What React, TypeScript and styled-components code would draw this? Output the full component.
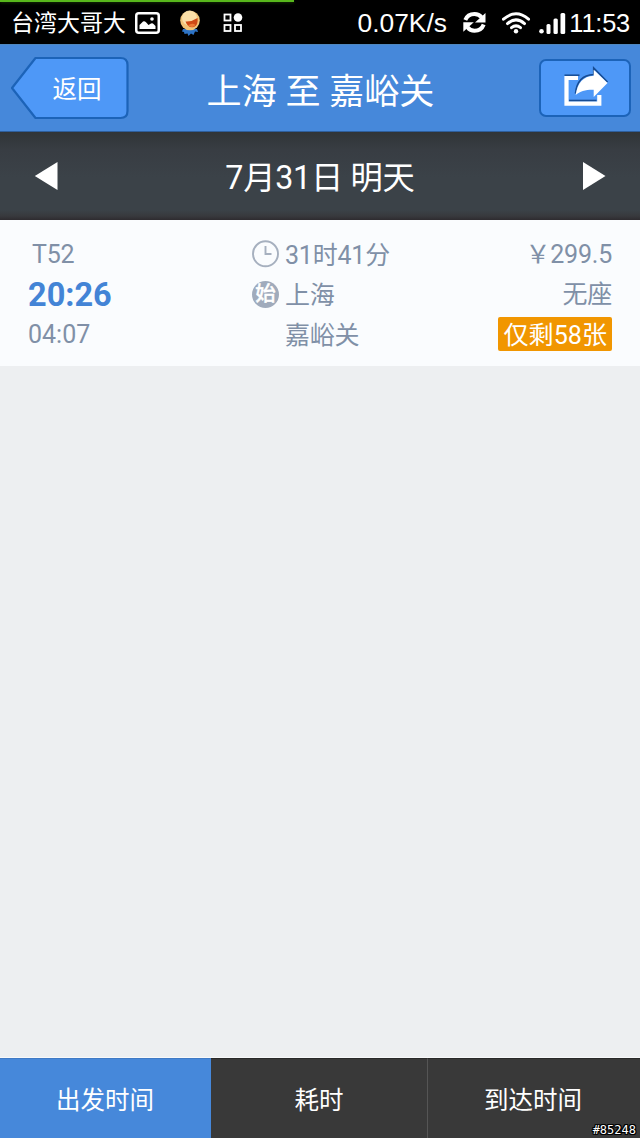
import React from "react";
import styled, { createGlobalStyle } from "styled-components";

const GlobalStyle = createGlobalStyle`
  *, *::before, *::after { box-sizing: border-box; }
  body {
    margin: 0;
    background: #edeff1;
    font-family: Roboto, "Noto Sans CJK SC", sans-serif;
  }
`;

const Screen = styled.div`
  position: relative;
  display: flex;
  flex-direction: column;
  width: 640px;
  height: 1138px;
  overflow: hidden;
  background: #edeff1;
`;

const StatusBar = styled.header`
  display: flex;
  flex-direction: column;
  height: 44px;
  background: #000;
  color: #fff;
  font-family: "Liberation Sans", "Noto Sans CJK SC", sans-serif;
`;

const Progress = styled.div`
  width: 294px;
  height: 2px;
  background: #58b71c;
  box-shadow: 0 1px 3px rgba(60, 150, 10, 0.35);
`;

const StatusRow = styled.div`
  display: flex;
  align-items: center;
  height: 41px;
  padding: 0 10px 0 11px;
`;

const Carrier = styled.span`
  width: 116px;
  font-size: 23px;
  line-height: 40px;
  white-space: nowrap;
`;

const StatusIcon = styled.svg<{ $gap: number }>`
  flex: none;
  margin-left: ${(p) => p.$gap}px;
`;

const NetSpeed = styled.span`
  margin-left: auto;
  font-size: 26.4px;
  line-height: 42px;
  white-space: nowrap;
`;

const StatusTime = styled.span`
  width: 61px;
  margin-left: 3px;
  font-size: 25.4px;
  letter-spacing: -0.2px;
  line-height: 42px;
  text-align: right;
  white-space: nowrap;
`;

const TitleBar = styled.div`
  display: flex;
  align-items: center;
  justify-content: space-between;
  height: 88px;
  padding: 0 9px 0 10px;
  background: #4688da;
  border-top: 1px solid #4f87bf;
  border-bottom: 1px solid #2f5f9c;
  color: #fff;
`;

const BackButton = styled.button`
  display: grid;
  width: 120px;
  height: 64px;
  padding: 0;
  border: 0;
  background: none;
  color: #fff;
  font: 24.5px/67px Roboto, "Noto Sans CJK SC", sans-serif;

  & > * {
    grid-area: 1 / 1;
  }
`;

const BackLabel = styled.span`
  padding-left: 14px;
`;

const Title = styled.h1`
  margin: 0 0 0 -28px;
  padding-top: 8px;
  font-size: 35.1px;
  font-weight: 400;
  line-height: 78px;
  white-space: nowrap;
`;

const ShareButton = styled.button`
  display: flex;
  width: 92px;
  height: 58px;
  padding: 0;
  border: 2px solid #1c63b8;
  border-radius: 7px;
  background: #4e98f7;
`;

const DateBar = styled.nav`
  display: flex;
  align-items: center;
  justify-content: space-between;
  height: 88px;
  padding: 0 34px;
  background: linear-gradient(#303437 0, #383d43 18px, #3b4248 45px, #3b4248 78px, #38393d 84px, #2e2b2f 100%);
  color: #fff;
`;

const DateLabel = styled.span`
  padding-top: 3px;
  font-size: 32.3px;
  letter-spacing: -0.3px;
  line-height: 84px;
  white-space: nowrap;
`;

const TrainCard = styled.article`
  display: grid;
  grid-template-columns: 223px 1fr auto;
  grid-auto-rows: 40px;
  align-items: center;
  height: 146px;
  padding: 14px 28px 12px;
  background: #fafcfe;
  color: #8090a7;
  font-size: 25px;
  letter-spacing: -0.2px;
  line-height: 40px;
  white-space: nowrap;
`;

const TrainNo = styled.span`
  padding: 2px 0 0 4px;
  line-height: 38px;
`;

const Depart = styled.strong`
  padding-top: 2px;
  color: #4384d6;
  font-size: 32.5px;
  font-weight: 700;
  letter-spacing: 0;
  line-height: 38px;
`;

const Arrive = styled.span`
  padding-top: 2px;
  letter-spacing: 0;
  line-height: 38px;
`;

const Detail = styled.span`
  display: grid;
  grid-template-columns: 29px auto;
  column-gap: 5px;
  align-items: center;
`;

const DetailText = styled.span`
  grid-column: 2;
  padding-top: 3px;
  line-height: 37px;
`;

const OriginMark = styled.span`
  width: 27px;
  height: 27px;
  margin-left: 1px;
  border-radius: 50%;
  background: #a0abbc;
  color: #fff;
  font-size: 20.5px;
  font-weight: 500;
  line-height: 27px;
  text-align: center;
  -webkit-text-stroke: 0.4px #fff;
`;

const Fare = styled.span`
  padding-top: 2px;
  line-height: 38px;
  text-align: right;
`;

const SeatsLeft = styled.span`
  height: 34px;
  padding: 0 5px 0 6px;
  border-radius: 2px;
  background: #f19600;
  color: #fff;
  font-size: 25.1px;
  letter-spacing: 0;
  line-height: 37px;
`;

const Empty = styled.main`
  flex: 1;
  border-bottom: 1px solid #f8f9fa;
`;

const SortBar = styled.footer`
  display: grid;
  grid-template-columns: 211px 217px 212px;
  height: 80px;
`;

const SortTab = styled.button<{ $active?: boolean }>`
  padding: 5px 0 0;
  border: 0;
  border-top: 1px solid ${(p) => (p.$active ? "#3f7ac5" : "#292929")};
  border-right: 1px solid ${(p) => (p.$active ? "#4688da" : "#555")};
  background: ${(p) => (p.$active ? "#4688da" : "#393939")};
  color: #fff;
  font: 24.5px/74px Roboto, "Noto Sans CJK SC", sans-serif;

  &:last-child {
    padding-right: 2px;
    border-right: 0;
  }
`;

const PostMark = styled.span`
  position: absolute;
  right: 4px;
  bottom: 1px;
  color: #fff;
  font: 12px/14px "DejaVu Sans Mono", monospace;
  text-shadow: -1px -1px #000, 1px -1px #000, -1px 1px #000, 1px 1px #000,
    0 1px #000, 0 -1px #000, 1px 0 #000, -1px 0 #000;
`;

const PictureIcon = () => (
  <StatusIcon $gap={8} width="25" height="22" viewBox="0 0 25 22">
    <rect x="1.25" y="1.25" width="22.5" height="19.5" rx="2.5" fill="none" stroke="#fff" strokeWidth="2.5" />
    <path d="M4.500 17v-4l3.500-3.500q1.500-.8 3 .8l2.500 2.700 2.500-1.500q1.500-.6 2.500.4l2 2v3.100z" fill="#fff" />
    <circle cx="17" cy="7" r="1.8" fill="#fff" />
  </StatusIcon>
);

const MascotIcon = () => (
  <StatusIcon $gap={19} width="22" height="26" viewBox="0 0 22 26">
    <path d="M4 19h14l1 3-3-.5-1.500 3.500-2.500-1.500-2.500 2.500-1-2.500-3 .5-.5-2-2-.5z" fill="#2d73c6" />
    <circle cx="11" cy="10.500" r="9.800" fill="#f2c478" />
    <circle cx="10.500" cy="8" r="7.500" fill="#fce6b4" opacity=".8" />
    <path d="M6.500 11.500q6 .5 12-3.500 1 7-3.500 9-6 1.500-8.500-5.500z" fill="#cf4a16" />
    <path d="M9 15.500q4-3 7.500-.5-3 3.500-7.500.5z" fill="#ec7a35" />
  </StatusIcon>
);

const AppsIcon = () => (
  <StatusIcon $gap={22} width="20" height="20" viewBox="0 0 20 20" fill="none" stroke="#fff" strokeWidth="1.800">
    <rect x="1.500" y="1.500" width="6" height="6" />
    <rect x="1.500" y="12" width="6" height="6" />
    <rect x="12" y="12" width="6" height="6" />
    <circle cx="15" cy="4.500" r="4.300" fill="#fff" stroke="none" />
  </StatusIcon>
);

const SyncIcon = () => (
  <StatusIcon $gap={16} width="23" height="21" viewBox="0 0 23 21">
    <path d="M2.300 8C4 3.500 8 2 11.500 2c3.200 0 5.500 1.300 7 3.300" fill="none" stroke="#fff" strokeWidth="4" />
    <path d="M22.500 1v9.500h-10.500z" fill="#fff" />
    <path d="M20.700 12.500c-1.700 4.500-5.700 6.300-9.200 6.300-3.200 0-5.500-1.500-7-3.500" fill="none" stroke="#fff" strokeWidth="4" />
    <path d="M.3 19.800v-9.500h10.500z" fill="#fff" />
  </StatusIcon>
);

const WifiIcon = () => (
  <StatusIcon $gap={15} width="30" height="22" viewBox="0 0 30 22" fill="none" stroke="#fff" strokeWidth="3" strokeLinecap="round">
    <path d="M2.500 7.200Q15-3.600 27.500 7.200" />
    <path d="M6.500 11.600Q15 4.200 23.500 11.600" />
    <path d="M10.500 15.700Q15 12 19.500 15.700" />
    <circle cx="15" cy="19.300" r="2.200" fill="#fff" stroke="none" />
  </StatusIcon>
);

const SignalIcon = () => (
  <StatusIcon $gap={8} width="27" height="22" viewBox="0 0 27 22" fill="#fff">
    <circle cx="2.500" cy="19.300" r="2.300" />
    <rect x="7.500" y="12" width="4" height="10" rx="1.500" />
    <rect x="14.500" y="6.500" width="4.300" height="15.500" rx="1.500" />
    <rect x="21.500" y="1" width="4.700" height="21" rx="1.500" />
  </StatusIcon>
);

const ShareIcon = () => (
  <svg width="88" height="54" viewBox="0 0 88 54">
    <path d="M23.500 14.200h15" stroke="#174c93" strokeWidth="1.500" />
    <path d="M28 39.600h27.500" stroke="#174c93" strokeWidth="1.800" />
    <path d="M37 17H25.500v25.700h32.800V34" fill="none" stroke="#fff" strokeWidth="4.200" />
    <path d="M34.500 32.500C35.500 21.500 41 14 52.700 13.500V7L66.500 21" fill="none" stroke="#174c93" strokeWidth="1.600" />
    <path d="M34.700 34C36.500 22 42 15.300 52.700 14.800V8.700L66.500 22 52.700 36v-7.300C45 28.500 39 30 34.700 34z" fill="#fff" />
  </svg>
);

const Arrow = ({ next }: { next?: boolean }) => (
  <svg width="24" height="28" viewBox="0 0 24 28">
    <path d={next ? "M1 0L23.500 14 1 28z" : "M23.500 0L.8 14l22.700 14z"} fill="#fff" />
  </svg>
);

const ClockIcon = () => (
  <svg width="29" height="29" viewBox="0 0 29 29" fill="none" stroke="#a6b0bf" strokeWidth="1.900">
    <circle cx="14.500" cy="13.800" r="12.500" />
    <path d="M14.500 6v8h6" />
  </svg>
);

export default function App() {
  return (
    <>
      <GlobalStyle />
      <Screen>
        <StatusBar>
          <Progress />
          <StatusRow>
            <Carrier>台湾大哥大</Carrier>
            <PictureIcon />
            <MascotIcon />
            <AppsIcon />
            <NetSpeed>0.07K/s</NetSpeed>
            <SyncIcon />
            <WifiIcon />
            <SignalIcon />
            <StatusTime>11:53</StatusTime>
          </StatusRow>
        </StatusBar>
        <TitleBar>
          <BackButton>
            <svg width="120" height="64" viewBox="0 0 120 64">
              <path
                d="M25.500 2H110.500Q117.500 2 117.500 9V55Q117.500 62 110.500 62H25.500L2 32z"
                fill="#4e98f7"
                stroke="#1c63b8"
                strokeWidth="2.200"
                strokeLinejoin="round"
              />
            </svg>
            <BackLabel>返回</BackLabel>
          </BackButton>
          <Title>上海 至 嘉峪关</Title>
          <ShareButton aria-label="分享">
            <ShareIcon />
          </ShareButton>
        </TitleBar>
        <DateBar>
          <Arrow />
          <DateLabel>7月31日 明天</DateLabel>
          <Arrow next />
        </DateBar>
        <TrainCard>
          <TrainNo>T52</TrainNo>
          <Detail>
            <ClockIcon />
            <DetailText>31时41分</DetailText>
          </Detail>
          <Fare>￥299.5</Fare>
          <Depart>20:26</Depart>
          <Detail>
            <OriginMark>始</OriginMark>
            <DetailText>上海</DetailText>
          </Detail>
          <Fare>无座</Fare>
          <Arrive>04:07</Arrive>
          <Detail>
            <DetailText>嘉峪关</DetailText>
          </Detail>
          <SeatsLeft>仅剩58张</SeatsLeft>
        </TrainCard>
        <Empty />
        <SortBar>
          <SortTab $active>出发时间</SortTab>
          <SortTab>耗时</SortTab>
          <SortTab>到达时间</SortTab>
        </SortBar>
        <PostMark>#85248</PostMark>
      </Screen>
    </>
  );
}
